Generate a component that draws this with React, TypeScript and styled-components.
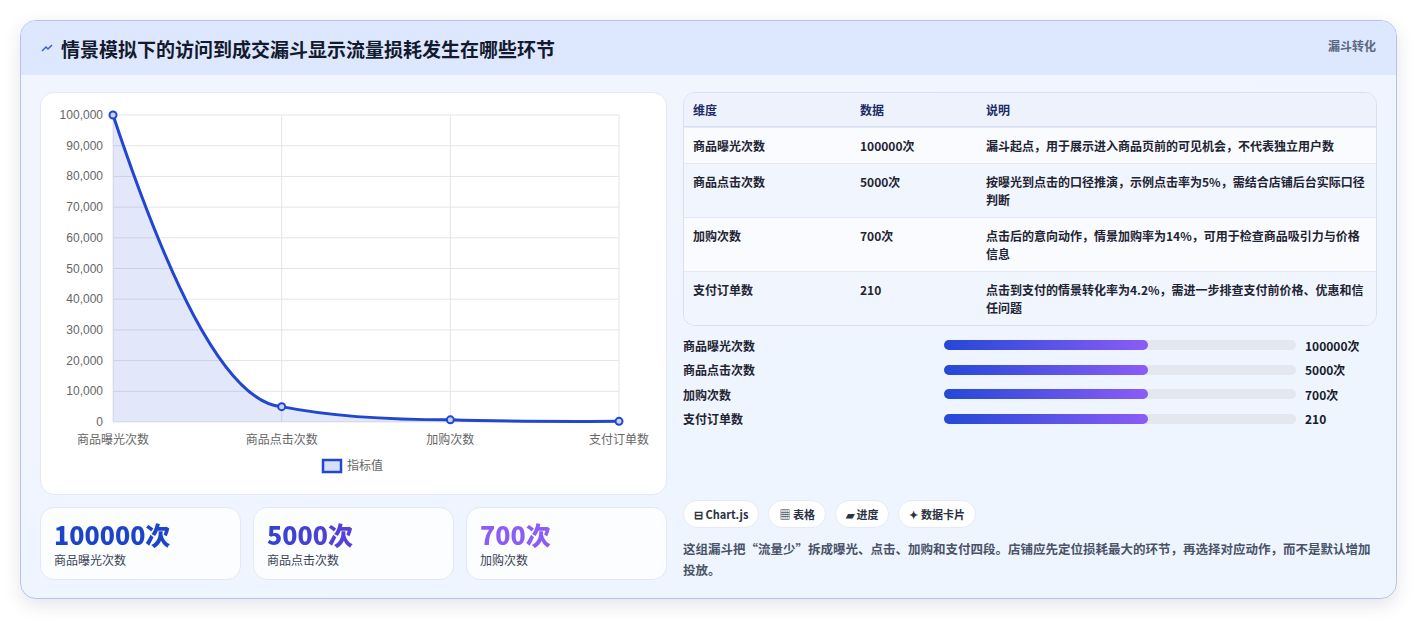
import React from 'react';
import styled, { createGlobalStyle } from 'styled-components';

const Global = createGlobalStyle`
  html, body { margin: 0; padding: 0; background: #fff; }
  body { font-family: "Noto Sans CJK SC", "Noto Sans", sans-serif; }
`;

const Page = styled.div`
  padding: 20px 20px 22px 20px;
`;

const Card = styled.div`
  width: 1377px;
  height: 579px;
  box-sizing: border-box;
  border: 1px solid #b6c3ea;
  border-radius: 16px;
  background: linear-gradient(160deg, #f1f5fe 0%, #eef5ff 100%);
  box-shadow: 0 6px 18px rgba(30, 40, 80, 0.12);
  overflow: hidden;
  display: flex;
  flex-direction: column;
`;

const Header = styled.div`
  height: 55px;
  background: #dde7fd;
  display: flex;
  align-items: center;
  justify-content: space-between;
  padding: 0 20px;
  position: relative;
`;

const Title = styled.h1`
  margin: 0;
  font-size: 19px;
  font-weight: 700;
  color: #141a2e;
  display: flex;
  align-items: center;
  gap: 8px;
`;

const Tag = styled.span`
  position: absolute;
  right: 20px;
  top: 16px;
  font-size: 12px;
  font-weight: 700;
  color: #5c6780;
`;

const Body = styled.div`
  flex: 1;
  display: grid;
  grid-template-columns: 627px 694px;
  gap: 16px;
  padding: 17px 19px 18px 19px;
`;

const Col = styled.div`
  display: flex;
  flex-direction: column;
`;

const ChartBox = styled.div`
  height: 403px;
  box-sizing: border-box;
  background: #fff;
  border: 1px solid #e3e8f3;
  border-radius: 14px;
`;

const Kpis = styled.div`
  display: grid;
  grid-template-columns: repeat(3, 1fr);
  gap: 12px;
  margin-top: 12px;
`;

const Kpi = styled.div`
  height: 73px;
  box-sizing: border-box;
  background: rgba(255, 255, 255, 0.75);
  border: 1px solid #e3e8f3;
  border-radius: 14px;
  padding: 9px 13px;
`;

const KpiNum = styled.div<{ $c: string }>`
  font-size: 25px;
  font-weight: 800;
  line-height: 34px;
  background: ${p => p.$c};
  -webkit-background-clip: text;
  background-clip: text;
  color: transparent;
  display: inline-block;
`;

const KpiLabel = styled.div`
  font-size: 12px;
  color: #3a4256;
`;

const Table = styled.table`
  width: 100%;
  border-collapse: separate;
  border-spacing: 0;
  border: 1px solid #d8dff0;
  border-radius: 12px;
  overflow: hidden;
  font-size: 12px;
  background: #f8faff;
`;

const Th = styled.th<{ $w?: number }>`
  text-align: left;
  font-weight: 700;
  color: #1d2b66;
  background: #edf2fd;
  padding: 8px 9px;
  height: 17px;
  width: ${p => (p.$w ? `${p.$w}px` : 'auto')};
  border-bottom: 1px solid #d8dff0;
`;

const Td = styled.td<{ $alt: boolean }>`
  vertical-align: top;
  padding: 9px 9px 8px;
  line-height: 18px;
  color: #1f2433;
  font-weight: 600;
  background: ${p => (p.$alt ? '#f1f5fe' : '#f9fbff')};
  border-top: 1px solid #e4e9f5;
`;

const Bars = styled.div`
  display: flex;
  flex-direction: column;
  gap: 6px;
  margin-top: 10px;
`;

const BarRow = styled.div`
  display: grid;
  grid-template-columns: 261px 361px 1fr;
  align-items: center;
  gap: 0;
  height: 18.5px;
  font-size: 12px;
  font-weight: 600;
  color: #1f2433;
`;

const Track = styled.div`
  height: 10px;
  border-radius: 5px;
  background: #e3e7ef;
  margin-right: 9px;
`;

const Fill = styled.div`
  height: 100%;
  border-radius: 5px;
  background: linear-gradient(90deg, #2448d6, #8b5cf6);
`;

const BarVal = styled.span`
  font-weight: 700;
  color: #161b29;
`;

const Chips = styled.div`
  display: flex;
  gap: 9px;
  margin-top: auto;
`;

const Chip = styled.span`
  height: 28px;
  box-sizing: border-box;
  padding: 0 10px;
  display: inline-flex;
  align-items: center;
  gap: 4px;
  border-radius: 14px;
  background: #fff;
  border: 1px solid #e6eaf3;
  font-size: 11px;
  font-weight: 700;
  color: #2a3142;
`;

const Note = styled.p`
  margin: 10px 0 0;
  font-size: 12.5px;
  line-height: 21px;
  font-weight: 600;
  color: #4a5368;
`;

const rows = [
  ['商品曝光次数', '100000次', '漏斗起点，用于展示进入商品页前的可见机会，不代表独立用户数'],
  ['商品点击次数', '5000次', '按曝光到点击的口径推演，示例点击率为5%，需结合店铺后台实际口径判断'],
  ['加购次数', '700次', '点击后的意向动作，情景加购率为14%，可用于检查商品吸引力与价格信息'],
  ['支付订单数', '210', '点击到支付的情景转化率为4.2%，需进一步排查支付前价格、优惠和信任问题'],
];

function Chart() {
  const x0 = 72, x1 = 578, yTop = 22, yBot = 329;
  const ys = [100000, 5000, 700, 210].map(v => yBot - (v / 100000) * (yBot - yTop));
  const xs = [0, 1, 2, 3].map(i => x0 + (i * (x1 - x0)) / 3);
  const line = `M${xs[0]},${ys[0]} C${xs[0] + 50},${ys[0] + 150} ${xs[1] - 60},${ys[1] - 5} ${xs[1]},${ys[1]} C${xs[1] + 50},${ys[1] + 10} ${xs[2] - 60},${ys[2]} ${xs[2]},${ys[2]} C${xs[2] + 60},${ys[2] + 2} ${xs[3] - 60},${ys[3]} ${xs[3]},${ys[3]}`;
  const ticks = Array.from({ length: 11 }, (_, i) => i * 10000);
  const labels = ['商品曝光次数', '商品点击次数', '加购次数', '支付订单数'];
  return (
    <svg width="625" height="401" viewBox="0 0 625 401" style={{ display: 'block' }}>
      {ticks.map(t => {
        const y = yBot - (t / 100000) * (yBot - yTop);
        return (
          <g key={t}>
            <line x1={x0} x2={x1} y1={y} y2={y} stroke="#e5e5e5" />
            <text x={x0 - 10} y={y + 4} fontSize="12" fill="#666" textAnchor="end" fontFamily="Liberation Sans, sans-serif">
              {t.toLocaleString('en-US')}
            </text>
          </g>
        );
      })}
      {xs.map((x, i) => (
        <g key={i}>
          <line x1={x} x2={x} y1={yTop} y2={yBot} stroke="#e5e5e5" />
          <text x={x} y={yBot + 22} fontSize="12" fill="#666" textAnchor="middle">{labels[i]}</text>
        </g>
      ))}
      <path d={`${line} L${xs[3]},${yBot} L${xs[0]},${yBot} Z`} fill="rgba(37,72,214,0.13)" />
      <path d={line} fill="none" stroke="#2146d0" strokeWidth="3" />
      {xs.map((x, i) => (
        <circle key={i} cx={x} cy={ys[i]} r="3.5" fill="#c9d3f5" stroke="#2146d0" strokeWidth="2" />
      ))}
      <rect x="282" y="367" width="18" height="12" fill="#d6def8" stroke="#2146d0" strokeWidth="2.5" />
      <text x="306" y="377" fontSize="12" fill="#666">指标值</text>
    </svg>
  );
}

export default function App() {
  return (
    <Page>
      <Global />
      <Card>
        <Header>
          <Title>
            <svg width="12" height="12" viewBox="0 0 12 12">
              <path d="M1 9 L5 5 L7 7 L11 3" stroke="#3b5bdb" strokeWidth="1.5" fill="none" />
            </svg>
            情景模拟下的访问到成交漏斗显示流量损耗发生在哪些环节
          </Title>
          <Tag>漏斗转化</Tag>
        </Header>
        <Body>
          <Col>
            <ChartBox><Chart /></ChartBox>
            <Kpis>
              <Kpi><KpiNum $c="#1d44c8">100000次</KpiNum><KpiLabel>商品曝光次数</KpiLabel></Kpi>
              <Kpi><KpiNum $c="linear-gradient(90deg,#3343d0,#5b3fd8)">5000次</KpiNum><KpiLabel>商品点击次数</KpiLabel></Kpi>
              <Kpi><KpiNum $c="#8b5cf6">700次</KpiNum><KpiLabel>加购次数</KpiLabel></Kpi>
            </Kpis>
          </Col>
          <Col>
            <Table>
              <thead>
                <tr><Th $w={149}>维度</Th><Th $w={108}>数据</Th><Th>说明</Th></tr>
              </thead>
              <tbody>
                {rows.map((r, i) => (
                  <tr key={i}>
                    {r.map((c, j) => <Td key={j} $alt={i % 2 === 1}>{c}</Td>)}
                  </tr>
                ))}
              </tbody>
            </Table>
            <Bars>
              {rows.map((r, i) => (
                <BarRow key={i}>
                  <span>{r[0]}</span>
                  <Track><Fill style={{ width: '58%' }} /></Track>
                  <BarVal>{r[1]}</BarVal>
                </BarRow>
              ))}
            </Bars>
            <Chips>
              <Chip>⊟ Chart.js</Chip>
              <Chip>▦ 表格</Chip>
              <Chip>▰ 进度</Chip>
              <Chip>✦ 数据卡片</Chip>
            </Chips>
            <Note>这组漏斗把“流量少”拆成曝光、点击、加购和支付四段。店铺应先定位损耗最大的环节，再选择对应动作，而不是默认增加投放。</Note>
          </Col>
        </Body>
      </Card>
    </Page>
  );
}
